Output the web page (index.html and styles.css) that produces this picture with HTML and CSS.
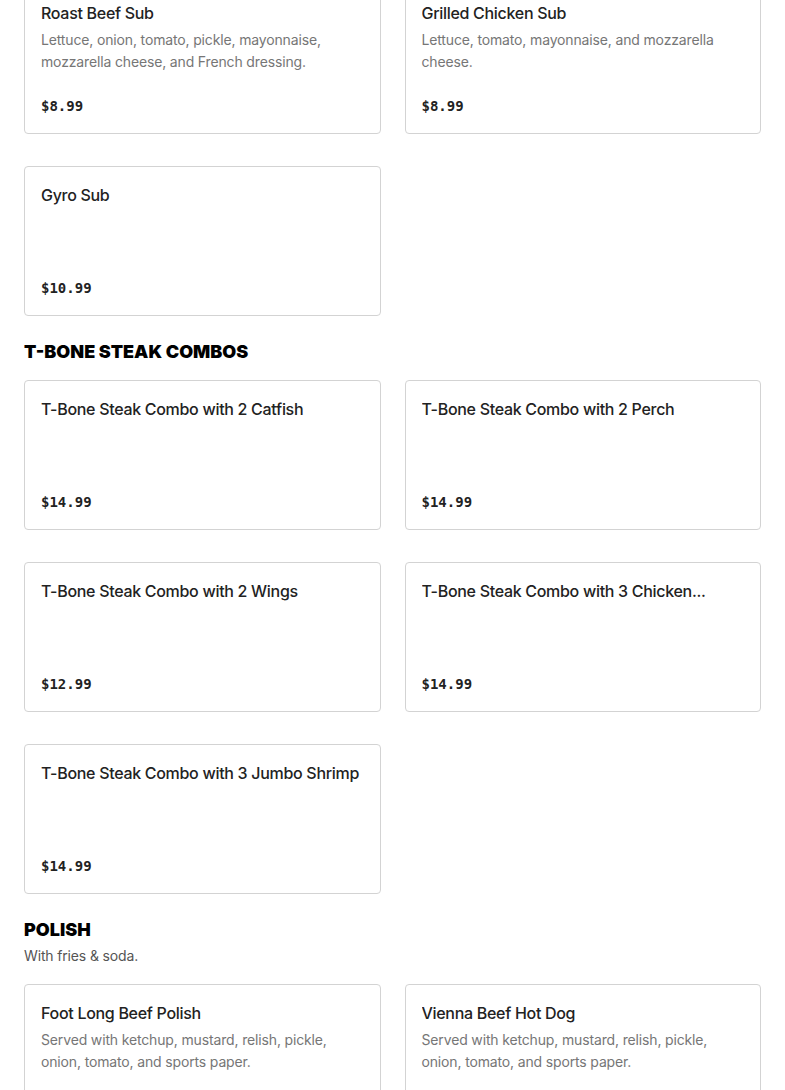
FILE: index.html
```html
<!DOCTYPE html>
<html lang="en">
<head>
<meta charset="utf-8">
<title>Menu</title>
<link rel="stylesheet" href="styles.css">
</head>
<body>
<main class="menu">
  <section class="section section-first">
    <div class="grid">
      <article class="card">
        <h3 class="item-name">Roast Beef Sub</h3>
        <p class="item-desc">Lettuce, onion, tomato, pickle, mayonnaise, mozzarella cheese, and French dressing.</p>
        <div class="item-price">$8.99</div>
      </article>
      <article class="card">
        <h3 class="item-name">Grilled Chicken Sub</h3>
        <p class="item-desc">Lettuce, tomato, mayonnaise, and mozzarella cheese.</p>
        <div class="item-price">$8.99</div>
      </article>
      <article class="card">
        <h3 class="item-name">Gyro Sub</h3>
        <div class="item-price">$10.99</div>
      </article>
    </div>
  </section>

  <section class="section">
    <h2 class="section-title">T-BONE STEAK COMBOS</h2>
    <div class="grid">
      <article class="card">
        <h3 class="item-name">T-Bone Steak Combo with 2 Catfish</h3>
        <div class="item-price">$14.99</div>
      </article>
      <article class="card">
        <h3 class="item-name">T-Bone Steak Combo with 2 Perch</h3>
        <div class="item-price">$14.99</div>
      </article>
      <article class="card">
        <h3 class="item-name">T-Bone Steak Combo with 2 Wings</h3>
        <div class="item-price">$12.99</div>
      </article>
      <article class="card">
        <h3 class="item-name">T-Bone Steak Combo with 3 Chicken...</h3>
        <div class="item-price">$14.99</div>
      </article>
      <article class="card">
        <h3 class="item-name">T-Bone Steak Combo with 3 Jumbo Shrimp</h3>
        <div class="item-price">$14.99</div>
      </article>
    </div>
  </section>

  <section class="section">
    <h2 class="section-title">POLISH</h2>
    <p class="section-desc">With fries &amp; soda.</p>
    <div class="grid">
      <article class="card">
        <h3 class="item-name">Foot Long Beef Polish</h3>
        <p class="item-desc">Served with ketchup, mustard, relish, pickle, onion, tomato, and sports paper.</p>
        <div class="item-price">$5.99</div>
      </article>
      <article class="card">
        <h3 class="item-name">Vienna Beef Hot Dog</h3>
        <p class="item-desc">Served with ketchup, mustard, relish, pickle, onion, tomato, and sports paper.</p>
        <div class="item-price">$4.99</div>
      </article>
    </div>
  </section>
</main>
</body>
</html>
```

FILE: styles.css
```css
* {
  box-sizing: border-box;
}

html, body {
  margin: 0;
  padding: 0;
  background: #ffffff;
}

body {
  font-family: "Inter", "Liberation Sans", sans-serif;
  color: #222222;
}

.menu {
  padding: 0 24px;
}

.section {
  margin-top: 24px;
}

.section-first {
  margin-top: -16px;
}

.section-title {
  margin: 0 0 16px;
  font-family: "Inter", "Liberation Sans", sans-serif;
  font-weight: 900;
  font-size: 18px;
  line-height: 24px;
  color: #000000;
  letter-spacing: 0;
}

.section-desc {
  margin: -13px 0 17px;
  font-size: 14px;
  line-height: 22px;
  letter-spacing: -0.15px;
  color: #555555;
}

.grid {
  display: grid;
  grid-template-columns: minmax(0, 1fr) minmax(0, 1fr);
  column-gap: 24px;
  row-gap: 32px;
}

.card {
  display: flex;
  flex-direction: column;
  height: 150px;
  padding: 16px 16px 15px;
  border: 1px solid #d3d3d3;
  border-radius: 4px;
  background: #ffffff;
}

.item-name {
  margin: 0;
  font-size: 16px;
  font-weight: 500;
  line-height: 24px;
  letter-spacing: -0.3px;
  color: #222222;
  white-space: nowrap;
  overflow: hidden;
}

.item-desc {
  margin: 4px 0 0;
  font-size: 14px;
  line-height: 22px;
  letter-spacing: -0.15px;
  color: #767676;
}

.item-price {
  margin-top: auto;
  font-family: "DejaVu Sans Mono", "Liberation Mono", monospace;
  font-weight: bold;
  font-size: 14px;
  line-height: 24px;
  color: #222222;
}
```
